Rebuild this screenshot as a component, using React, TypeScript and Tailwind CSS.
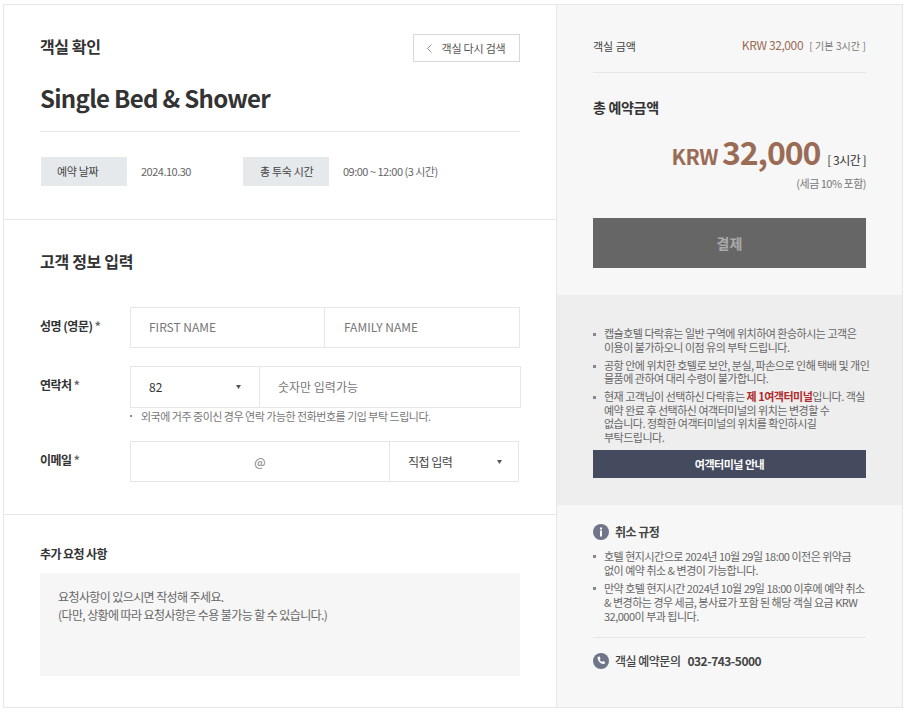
import React from "react";

const fieldLabel = "w-[90px] shrink-0 text-[12px] font-bold text-[#333] leading-[18px] tracking-[-0.5px]";

const Caret = () => (
  <svg className="w-[5px] h-[4px]" viewBox="0 0 5 4" fill="#555">
    <path d="M0 0h5L2.5 4z" />
  </svg>
);

const Bullet: React.FC<{ children: React.ReactNode }> = ({ children }) => (
  <li className="flex whitespace-nowrap">
    <span className="w-[11px] shrink-0 flex pt-[6px]">
      <span className="w-[3px] h-[3px] bg-[#888]" />
    </span>
    <span className="flex-1">{children}</span>
  </li>
);

export default function App() {
  return (
    <div
      className="w-[907px] h-[712px] overflow-hidden bg-white pt-[4px] pl-[3px] text-[#666]"
      style={{ fontFamily: '"Noto Sans CJK KR", "Noto Sans", sans-serif' }}
    >
      <div className="flex w-[901px] items-start">
        {/* Left column */}
        <div className="w-[554px] border-l border-t border-r border-[#e6e6e6]">
          <section className="h-[215px] px-[36px] border-b border-[#e6e6e6]">
            <div className="flex items-start justify-between pt-[29px]">
              <h2 className="text-[16px] font-bold text-[#333] leading-[24px] tracking-[-0.4px]">객실 확인</h2>
              <button className="w-[107px] h-[28px] border border-[#d5d8e0] flex items-center justify-center gap-[9px] text-[11px] text-[#555] tracking-[-0.2px]">
                <svg className="w-[5px] h-[9px]" viewBox="0 0 5 9" fill="none" stroke="#777" strokeWidth="0.8">
                  <path d="M4.5 0.5L0.5 4.5L4.5 8.5" />
                </svg>
                객실 다시 검색
              </button>
            </div>
            <h1 className="mt-[16px] text-[24px] font-bold text-[#333] leading-[40px] tracking-[-0.7px] pb-[13px] border-b border-[#e6e6e6]">
              Single Bed &amp; Shower
            </h1>
            <div className="flex items-center mt-[25px] pl-[1px]">
              <span className="w-[86px] h-[29px] bg-[#e6e9ec] flex items-center pl-[16px] text-[11px] text-[#444] tracking-[-0.3px]">예약 날짜</span>
              <span className="ml-[14px] w-[102px] text-[11px] tracking-[-0.5px]">2024.10.30</span>
              <span className="w-[86px] h-[29px] bg-[#e6e9ec] flex items-center pl-[17px] text-[11px] text-[#444] tracking-[-0.3px]">총 투숙 시간</span>
              <span className="ml-[14px] text-[11px] tracking-[-0.5px]">09:00 ~ 12:00 (3 시간)</span>
            </div>
          </section>

          <section className="h-[295px] px-[36px] border-b border-[#e6e6e6]">
            <h2 className="pt-[29px] text-[16px] font-bold text-[#333] leading-[24px] tracking-[-0.3px]">고객 정보 입력</h2>
            <div className="flex mt-[34px]">
              <div className={`${fieldLabel} pt-[10px]`}>
                성명 (영문) <span className="text-[#666]">*</span>
              </div>
              <div className="flex w-[390px] h-[41px] border border-[#e6e6e6] text-[12px] text-[#777] items-center">
                <span className="w-[194px] h-full flex items-center pl-[18px] pb-[1px] border-r border-[#e6e6e6]">FIRST NAME</span>
                <span className="pl-[19px] pb-[1px]">FAMILY NAME</span>
              </div>
            </div>
            <div className="flex mt-[18px]">
              <div className={`${fieldLabel} pt-[10px]`}>
                연락처 <span className="text-[#666]">*</span>
              </div>
              <div>
                <div className="flex w-[391px] h-[42px] border border-[#e6e6e6] text-[12px] items-center">
                  <span className="w-[129px] h-full flex items-center justify-between pl-[18px] pr-[18px] border-r border-[#e6e6e6] text-[#333]">
                    82
                    <Caret />
                  </span>
                  <span className="pl-[18px] text-[#777]">숫자만 입력가능</span>
                </div>
                <div className="flex items-center text-[11px] leading-[16px] tracking-[-0.5px] text-[#777]">
                  <span className="w-[2px] h-[2px] bg-[#888] mr-[9px]" />
                  외국에 거주 중이신 경우 연락 가능한 전화번호를 기입 부탁 드립니다.
                </div>
              </div>
            </div>
            <div className="flex mt-[17px]">
              <div className={`${fieldLabel} pt-[10px]`}>
                이메일 <span className="text-[#666]">*</span>
              </div>
              <div className="flex w-[389px] h-[41px] border border-[#e6e6e6] text-[12px] items-center">
                <span className="w-[259px] h-full flex items-center justify-center border-r border-[#e6e6e6] text-[#777]">@</span>
                <span className="flex-1 flex items-center justify-between pl-[18px] pr-[16px] text-[#444] tracking-[-0.5px]">
                  직접 입력
                  <Caret />
                </span>
              </div>
            </div>
          </section>

          <section className="h-[193px] px-[36px] border-b border-[#e6e6e6]">
            <h3 className="pt-[30px] text-[12px] font-bold text-[#333] leading-[18px] tracking-[-0.6px]">추가 요청 사항</h3>
            <div className="mt-[10px] h-[103px] bg-[#f6f6f6] px-[18px] pt-[15px] text-[12px] leading-[18px] tracking-[-0.6px] text-[#666]">
              요청사항이 있으시면 작성해 주세요.
              <br />
              (다만, 상황에 따라 요청사항은 수용 불가능 할 수 있습니다.)
            </div>
          </section>
        </div>

        {/* Right column */}
        <aside className="w-[346px] h-[704px] border-t border-r border-b border-[#e6e6e6] bg-[#f7f7f7]">
          <div className="h-[290px] px-[36px]">
            <div className="flex justify-between items-center pt-[30px] pb-[16px] border-b border-[#e6e6e6] text-[11px] leading-[20px]">
              <span className="text-[#444] text-[11px]">객실 금액</span>
              <span>
                <span className="text-[#9a6b55] text-[12px] tracking-[-0.4px]">KRW 32,000</span>
                <span className="ml-[6px] text-[#777] text-[10px] tracking-[0.1px]">[ 기본 3시간 ]</span>
              </span>
            </div>
            <div className="mt-[24px] text-[14px] font-bold text-[#333] leading-[20px] tracking-[-0.3px]">총 예약금액</div>
            <div className="flex justify-end items-baseline mt-[12px] leading-[44px]">
              <span className="text-[21px] font-bold text-[#9a6b55] tracking-[-0.5px]">KRW</span>
              <span className="ml-[4px] text-[32px] font-bold text-[#9a6b55] tracking-[-1.1px]">32,000</span>
              <span className="ml-[7px] text-[12px] text-[#333] tracking-[-0.5px]">[ 3시간 ]</span>
            </div>
            <div className="text-right text-[11px] leading-[16px] tracking-[-0.5px] text-[#777] -mt-[7px]">(세금 10% 포함)</div>
            <button className="mt-[27px] w-full h-[50px] bg-[#666] text-[#aaa] text-[14px] font-bold">결제</button>
          </div>

          <div className="h-[210px] bg-[#eeeeee] px-[36px] pt-[32px]">
            <ul className="text-[11px] leading-[13.5px] tracking-[-0.5px] text-[#666] space-y-[4.5px]">
              <Bullet>
                캡슐호텔 다락휴는 일반 구역에 위치하여 환승하시는 고객은
                <br />
                이용이 불가하오니 이점 유의 부탁 드립니다.
              </Bullet>
              <Bullet>
                공항 안에 위치한 호텔로 보안, 분실, 파손으로 인해 택배 및 개인
                <br />
                물품에 관하여 대리 수령이 불가합니다.
              </Bullet>
              <Bullet>
                현재 고객님이 선택하신 다락휴는 <b className="text-[#b02a2a]">제 1여객터미널</b>입니다. 객실
                <br />
                예약 완료 후 선택하신 여객터미널의 위치는 변경할 수
                <br />
                없습니다. 정확한 여객터미널의 위치를 확인하시길
                <br />
                부탁드립니다.
              </Bullet>
            </ul>
            <button className="mt-[6px] w-full h-[28px] bg-[#454b5f] text-white text-[11px] font-bold tracking-[-0.5px]">여객터미널 안내</button>
          </div>

          <div className="px-[36px] pt-[18px]">
            <div className="flex items-center gap-[6px] text-[12px] font-bold text-[#444] leading-[18px] tracking-[-0.5px]">
              <svg className="w-[16px] h-[16px]" viewBox="0 0 16 16">
                <circle cx="8" cy="8" r="8" fill="#6f7689" />
                <rect x="7" y="3.5" width="2" height="2" fill="#fff" />
                <rect x="7" y="6.5" width="2" height="6" fill="#fff" />
              </svg>
              취소 규정
            </div>
            <ul className="mt-[8px] text-[11px] leading-[14px] tracking-[-0.5px] text-[#666] space-y-[4px]">
              <Bullet>
                호텔 현지시간으로 2024년 10월 29일 18:00 이전은 위약금
                <br />
                없이 예약 취소 &amp; 변경이 가능합니다.
              </Bullet>
              <Bullet>
                만약 호텔 현지시간 2024년 10월 29일 18:00 이후에 예약 취소
                <br />
                &amp; 변경하는 경우 세금, 봉사료가 포함 된 해당 객실 요금 KRW
                <br />
                32,000이 부과 됩니다.
              </Bullet>
            </ul>
            <div className="mt-[14px] border-t border-[#e6e6e6] pt-[14px] flex items-center gap-[6px] text-[12px] font-medium text-[#444] leading-[18px] tracking-[-0.5px]">
              <svg className="w-[16px] h-[16px]" viewBox="0 0 16 16">
                <circle cx="8" cy="8" r="8" fill="#6f7689" />
                <path
                  d="M5.2 3.8l1.4-.3 1 2.2-.9.8c.4 1 1.2 1.9 2.3 2.4l.8-.9 2.2 1-.3 1.5c-.1.4-.5.7-.9.6C7.300 10.600 4.800 7.900 4.500 4.700c0-.4.300-.8.700-.9z"
                  fill="#fff"
                />
              </svg>
              객실 예약문의
              <span className="ml-[1px] font-bold text-[#444]">032-743-5000</span>
            </div>
          </div>
        </aside>
      </div>
    </div>
  );
}
